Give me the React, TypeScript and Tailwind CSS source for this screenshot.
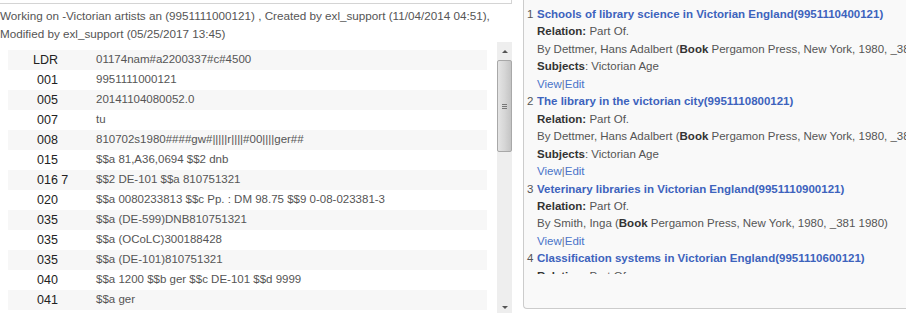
import React from "react";

type MarcRow = { tag: string; value: string; shift?: string };

const rows: MarcRow[] = [
  { tag: "LDR", value: "01174nam#a2200337#c#4500", shift: "pl-[25px]" },
  { tag: "001", value: "9951111000121" },
  { tag: "005", value: "20141104080052.0" },
  { tag: "007", value: "tu" },
  { tag: "008", value: "810702s1980####gw#|||||r||||#00||||ger##" },
  { tag: "015", value: "$$a 81,A36,0694 $$2 dnb" },
  { tag: "016 7", value: "$$2 DE-101 $$a 810751321" },
  { tag: "020", value: "$$a 0080233813 $$c Pp. : DM 98.75 $$9 0-08-023381-3" },
  { tag: "035", value: "$$a (DE-599)DNB810751321" },
  { tag: "035", value: "$$a (OCoLC)300188428" },
  { tag: "035", value: "$$a (DE-101)810751321" },
  { tag: "040", value: "$$a 1200 $$b ger $$c DE-101 $$d 9999" },
  { tag: "041", value: "$$a ger" },
];

type Related = {
  title: string;
  author: string;
  pub: string;
  subjects?: string;
};

const related: Related[] = [
  {
    title: "Schools of library science in Victorian England(9951110400121)",
    author: "By Dettmer, Hans Adalbert (",
    pub: " Pergamon Press, New York, 1980, _381 1980)",
    subjects: "Victorian Age",
  },
  {
    title: "The library in the victorian city(9951110800121)",
    author: "By Dettmer, Hans Adalbert (",
    pub: " Pergamon Press, New York, 1980, _381 1980)",
    subjects: "Victorian Age",
  },
  {
    title: "Veterinary libraries in Victorian England(9951110900121)",
    author: "By Smith, Inga (",
    pub: " Pergamon Press, New York, 1980, _381 1980)",
  },
  {
    title: "Classification systems in Victorian England(9951110600121)",
    author: "By Smith, Inga (",
    pub: " Pergamon Press, New York, 1980, _381 1980)",
  },
];

const Scrollbar: React.FC = () => (
  <div className="w-[15px] shrink-0 bg-[#eeeeee] flex flex-col items-center">
    <div className="h-[18px] flex items-center justify-center">
      <div className="w-0 h-0 border-l-[3px] border-r-[3px] border-b-[3px] border-l-transparent border-r-transparent border-b-[#555]" />
    </div>
    <div className="w-[15px] h-[92px] rounded-[2px] border border-[#a8a8a8] bg-gradient-to-r from-[#e4e4e4] via-[#d6d6d6] to-[#c4c4c4] flex flex-col items-center justify-center gap-[1px]">
      <div className="w-[5px] h-px bg-[#777]" />
      <div className="w-[5px] h-px bg-[#777]" />
      <div className="w-[5px] h-px bg-[#777]" />
    </div>
    <div className="flex-1" />
    <div className="h-[10px] flex items-start justify-center pt-[3px]">
      <div className="w-0 h-0 border-l-[3px] border-r-[3px] border-t-[3px] border-l-transparent border-r-transparent border-t-[#555]" />
    </div>
  </div>
);

const App: React.FC = () => {
  return (
    <div
      className="w-[906px] h-[313px] overflow-hidden flex bg-white text-[11.5px] text-[#555]"
      style={{ fontFamily: '"Liberation Sans", Arial, sans-serif' }}
    >
      {/* Record editor */}
      <div className="w-[512px] shrink-0 flex flex-col">
        <div className="h-[4px] border-b border-r border-[#d4d4d4]" />
        <div className="pt-[3px] leading-[17.5px] whitespace-nowrap text-[11.7px]">
          <div>Working on -Victorian artists an (9951111000121) , Created by exl_support (11/04/2014 04:51),</div>
          <div>Modified by exl_support (05/25/2017 13:45)</div>
        </div>
        <div className="flex flex-1 min-h-0">
          <div className="flex-1 pl-[8px] pr-[10px] pt-[8px] overflow-hidden">
            {rows.map((r, i) => (
              <div
                key={i}
                className={`flex h-[20px] items-center ${i % 2 === 0 ? "bg-[#f7f7f7]" : "bg-white"}`}
              >
                <div className={`w-[88px] shrink-0 text-[#222] text-[12.5px] ${r.shift ?? "pl-[29px]"}`}>
                  {r.tag}
                </div>
                <div className="whitespace-nowrap">{r.value}</div>
              </div>
            ))}
          </div>
          <Scrollbar />
        </div>
      </div>

      {/* Related records */}
      <div className="flex-1 pl-[11px] min-w-0">
        <div className="h-[309px] w-[440px] bg-[#f9f9f9] border-l border-b border-[#cccccc] rounded-bl-[4px]">
          <div className="h-[274px] overflow-hidden pt-[6px] pl-[3px] leading-[17.45px] whitespace-nowrap">
            {related.map((item, i) => (
              <div key={i} className="flex">
                <div className="w-[10px] shrink-0">{i + 1}</div>
                <div>
                  <div className="font-bold text-[#3d63bd]">{item.title}</div>
                  <div>
                    <span className="font-bold text-[#333]">Relation:</span> Part Of.
                  </div>
                  <div>
                    {item.author}
                    <span className="font-bold text-[#333]">Book</span>
                    {item.pub}
                  </div>
                  {item.subjects && (
                    <div>
                      <span className="font-bold text-[#333]">Subjects</span>: {item.subjects}
                    </div>
                  )}
                  <div className="text-[#4a74c9]">
                    View<span className="text-[#777]">|</span>Edit
                  </div>
                </div>
              </div>
            ))}
          </div>
        </div>
      </div>
    </div>
  );
};

export default App;
